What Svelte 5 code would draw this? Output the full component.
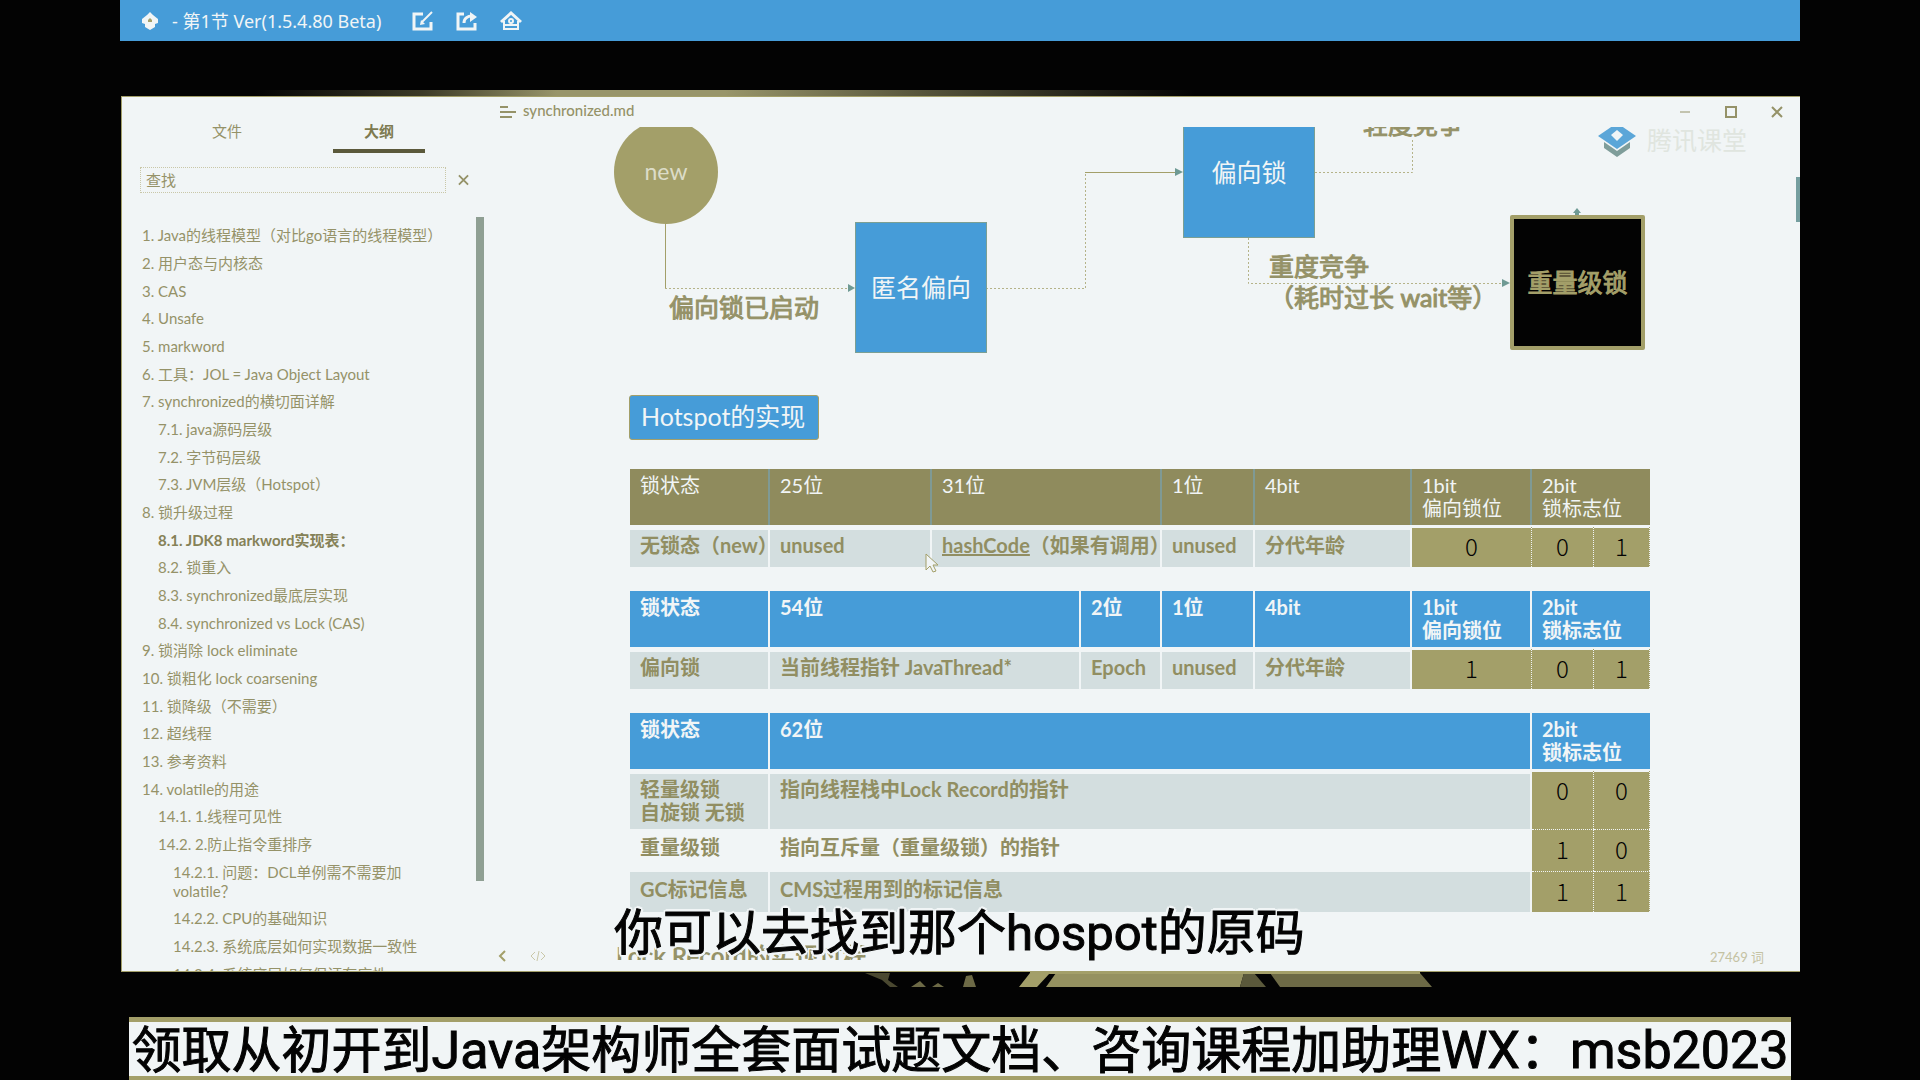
<script lang="ts">
  type Item = { n: string; t: string; l: number; b?: boolean };
  const outline: Item[] = [
    { n: '1.', t: 'Java的线程模型（对比go语言的线程模型）', l: 1 },
    { n: '2.', t: '用户态与内核态', l: 1 },
    { n: '3.', t: 'CAS', l: 1 },
    { n: '4.', t: 'Unsafe', l: 1 },
    { n: '5.', t: 'markword', l: 1 },
    { n: '6.', t: '工具：JOL = Java Object Layout', l: 1 },
    { n: '7.', t: 'synchronized的横切面详解', l: 1 },
    { n: '7.1.', t: 'java源码层级', l: 2 },
    { n: '7.2.', t: '字节码层级', l: 2 },
    { n: '7.3.', t: 'JVM层级（Hotspot）', l: 2 },
    { n: '8.', t: '锁升级过程', l: 1 },
    { n: '8.1.', t: 'JDK8 markword实现表：', l: 2, b: true },
    { n: '8.2.', t: '锁重入', l: 2 },
    { n: '8.3.', t: 'synchronized最底层实现', l: 2 },
    { n: '8.4.', t: 'synchronized vs Lock (CAS)', l: 2 },
    { n: '9.', t: '锁消除 lock eliminate', l: 1 },
    { n: '10.', t: '锁粗化 lock coarsening', l: 1 },
    { n: '11.', t: '锁降级（不需要）', l: 1 },
    { n: '12.', t: '超线程', l: 1 },
    { n: '13.', t: '参考资料', l: 1 },
    { n: '14.', t: 'volatile的用途', l: 1 },
    { n: '14.1.', t: '1.线程可见性', l: 2 },
    { n: '14.2.', t: '2.防止指令重排序', l: 2 },
    { n: '14.2.1.', t: '问题：DCL单例需不需要加volatile？', l: 3 },
    { n: '14.2.2.', t: 'CPU的基础知识', l: 3 },
    { n: '14.2.3.', t: '系统底层如何实现数据一致性', l: 3 },
    { n: '14.2.4.', t: '系统底层如何保证有序性', l: 3 }
  ];

  type Cell = { t: string; span?: number; bit?: boolean; link?: string };
  type Sheet = { tone: string; head: Cell[]; rows: Cell[][] };
  const cols = [140, 162, 149, 81, 93, 157, 120, 62, 56];
  const total = cols.reduce((a, b) => a + b, 0);
  const sheets: Sheet[] = [
    {
      tone: 'olive',
      head: [{ t: '锁状态' }, { t: '25位' }, { t: '31位', span: 2 }, { t: '1位' }, { t: '4bit' }, { t: '1bit\n偏向锁位' }, { t: '2bit\n锁标志位', span: 2 }],
      rows: [[{ t: '无锁态（new）' }, { t: 'unused' }, { t: '（如果有调用）', link: 'hashCode', span: 2 }, { t: 'unused' }, { t: '分代年龄' }, { t: '0', bit: true }, { t: '0', bit: true }, { t: '1', bit: true }]]
    },
    {
      tone: 'blue',
      head: [{ t: '锁状态' }, { t: '54位', span: 2 }, { t: '2位' }, { t: '1位' }, { t: '4bit' }, { t: '1bit\n偏向锁位' }, { t: '2bit\n锁标志位', span: 2 }],
      rows: [[{ t: '偏向锁' }, { t: '当前线程指针 JavaThread*', span: 2 }, { t: 'Epoch' }, { t: 'unused' }, { t: '分代年龄' }, { t: '1', bit: true }, { t: '0', bit: true }, { t: '1', bit: true }]]
    },
    {
      tone: 'blue',
      head: [{ t: '锁状态' }, { t: '62位', span: 6 }, { t: '2bit\n锁标志位', span: 2 }],
      rows: [
        [{ t: '轻量级锁\n自旋锁 无锁' }, { t: '指向线程栈中Lock Record的指针', span: 6 }, { t: '0', bit: true }, { t: '0', bit: true }],
        [{ t: '重量级锁' }, { t: '指向互斥量（重量级锁）的指针', span: 6 }, { t: '1', bit: true }, { t: '0', bit: true }],
        [{ t: 'GC标记信息' }, { t: 'CMS过程用到的标记信息', span: 6 }, { t: '1', bit: true }, { t: '1', bit: true }]
      ]
    }
  ];
</script>

<div class="page">
  <div class="stage">
    <header class="topbar">
      <svg class="brand" viewBox="0 0 18 20" aria-hidden="true">
        <path d="M9 1L12 4L17 8V12L14 13V16L9 19L4 16V13L1 12V8L6 4Z" fill="#f1f5f6" />
        <path d="M7 9L9 7L11 9V11H7Z" fill="#a39f69" />
      </svg>
      <span class="title">- 第1节 Ver(1.5.4.80 Beta)</span>
      <button aria-label="编辑">
        <svg viewBox="0 0 22 20"><path d="M11 3H2V18H19V11" stroke-width="3" /><path d="M10 11L20 1" /><path d="M8 14l1-5 4 4z" fill="#f1f5f6" stroke="none" /></svg>
      </button>
      <button aria-label="分享">
        <svg viewBox="0 0 22 20"><path d="M8 3H2V18H19V12" stroke-width="3" /><path d="M8 12C8 7 12 5 16 5" stroke-width="3" /><path d="M14 1L21 6L14 11Z" fill="#f1f5f6" stroke="none" /></svg>
      </button>
      <button aria-label="主页">
        <svg viewBox="0 0 22 20"><path d="M1 11L11 2L21 11" stroke-width="3" /><path d="M4 10V18H18V10" /><circle cx="11" cy="10" r="2" /><path d="M5 14H17" /></svg>
      </button>
    </header>

    <div class="strip top"></div>

    <main class="window">
      <aside class="side">
        <nav class="tabs" aria-label="侧栏">
          <button class="tab">文件</button>
          <button class="tab active">大纲</button>
        </nav>
        <div class="find">
          <input type="text" placeholder="查找" aria-label="查找" />
          <button aria-label="关闭查找"><svg viewBox="0 0 12 12"><path d="M1 1L11 11M11 1L1 11" /></svg></button>
        </div>
        <div class="outline">
          <ol>
            {#each outline as item}
              <li class="l{item.l}" class:current={item.b}>{item.n} {item.t}</li>
            {/each}
          </ol>
          <div class="thumb"></div>
        </div>
      </aside>

      <section class="doc">
        <div class="caption">
          <svg class="lines" viewBox="0 0 16 12"><path d="M0 1H8M0 6H16M0 11H12" /></svg>
          <span class="name">synchronized.md</span>
          <div class="controls">
            <button aria-label="最小化"><svg viewBox="0 0 12 12"><path d="M1 6H11" stroke-width="1" /></svg></button>
            <button aria-label="最大化"><svg viewBox="0 0 12 12"><path d="M1 1H11V11H1Z" /></svg></button>
            <button aria-label="关闭"><svg viewBox="0 0 12 12"><path d="M1 1L11 11M11 1L1 11" /></svg></button>
          </div>
        </div>

        <div class="canvas">
          <svg class="wires" viewBox="0 0 1315 245">
            <path class="solid" d="M180.500 97V161" />
            <path d="M180 161.500H366" />
            <path d="M501 161.500H600.500V45" />
            <path class="solid" d="M600 45.500H694" />
            <path d="M830 45.500H927.500V11" />
            <path d="M763.500 111V156.500H1020" />
            <g class="tips">
              <path d="M363 157L370 161L363 165Z" />
              <path d="M690 41L698 45L690 49Z" />
              <path d="M1017 152L1025 156L1017 160Z" />
              <path d="M1092 81L1096 86H1094V90H1090V86H1088Z" />
            </g>
          </svg>
          <div class="node round">new</div>
          <div class="node anon">匿名偏向</div>
          <div class="node biased">偏向锁</div>
          <div class="node heavy">重量级锁</div>
          <div class="label started">偏向锁已启动</div>
          <div class="label light">轻度竞争</div>
          <div class="label hard">重度竞争<br />（耗时过长 wait等）</div>
          <div class="mark">
            <svg viewBox="0 0 40 36">
              <path d="M20 1L39 14L20 27L1 14Z" fill="#5ba6d8" />
              <path d="M7 20L20 29L33 20V26L20 35L7 26Z" fill="#7f9d9a" />
              <path d="M20 8L26 13L20 19L14 13Z" fill="#f1f5f6" />
            </svg>
            <span>腾讯课堂</span>
          </div>
          <svg class="pointer" viewBox="0 0 14 20" aria-hidden="true"><path d="M1 1V17L5 13L8 19L11 18L8 12H13Z" /></svg>
          <div class="scroll"></div>
        </div>

        <div class="body">
          <h2>Hotspot的实现</h2>
          {#each sheets as s}
            <table class={s.tone}>
              <colgroup>
                {#each cols as c}<col style="width: {(c / total) * 100}%" />{/each}
              </colgroup>
              <thead>
                <tr>{#each s.head as c}<th colspan={c.span ?? 1}>{c.t}</th>{/each}</tr>
              </thead>
              <tbody>
                {#each s.rows as r}
                  <tr>
                    {#each r as c}
                      <td colspan={c.span ?? 1} class:bit={c.bit}>{#if c.link}<u>{c.link}</u>{/if}{c.t}</td>
                    {/each}
                  </tr>
                {/each}
              </tbody>
            </table>
          {/each}
          <div class="next">Lock Record的实现过程</div>
        </div>

        <footer class="status">
          <button aria-label="返回"><svg viewBox="0 0 8 12"><path d="M7 1L2 6L7 11" /></svg></button>
          <button class="code" aria-label="源代码模式"><svg viewBox="0 0 16 12"><path d="M5 2L1 6L5 10M11 2L15 6L11 10M9 1L7 11" /></svg></button>
          <span class="count">27469 词</span>
        </footer>
      </section>
      <p class="subtitle">你可以去找到那个hospot的原码</p>
    </main>

    <svg class="strip bottom" viewBox="0 0 1680 45" preserveAspectRatio="none" aria-hidden="true">
      <path d="M745 1H770L768 8L778 15H770L762 8Z" fill="#4a4830" />
      <path d="M791 15L800 9L806 15ZM812 15L818 11L824 15ZM843 15L846 4L852 3L856 15Z" fill="#6d6a46" />
      <path d="M910 1H930L917 15H899Z" fill="#a39f69" />
      <path d="M936 1H1124L1120 15H926Z" fill="#959160" />
      <path d="M1124 1H1134L1146 15H1120Z" fill="#5b593b" />
      <path d="M1150 1H1300L1312 15H1160Z" fill="#6d6a46" />
      <path d="M910 0H1300V2H910Z" fill="#a39f69" />
    </svg>
  </div>
  <p class="banner">领取从初开到<b>Java</b>架构师全套面试题文档、咨询课程加助理<b>WX</b>：<b>msb2023</b></p>
</div>

<style>
  :global(body) { margin: 0; background: #030303; }
  .page {
    --paper: #f1f5f6;
    --olive: #a39f69;
    --blue: #469cd8;
    --ink: #959268;
    min-height: 100vh;
    display: flex;
    flex-direction: column;
    background: #030303;
    overflow: hidden;
    font-family: Lato, "Noto Sans CJK SC", sans-serif;
    color: var(--ink);
  }
  button { padding: 0; border: 0; background: none; color: inherit; font: inherit; display: flex; align-items: center; justify-content: center; }
  svg { display: block; fill: none; stroke: currentColor; stroke-width: 2; }
  p { margin: 0; }
  .stage { width: 87.5%; margin: 0 auto; }

  .topbar { height: 41px; display: flex; align-items: center; gap: 23px; padding-left: 21px; background: var(--blue); color: var(--paper); }
  .topbar svg { width: 22px; height: 20px; }
  .topbar .brand { width: 18px; height: 20px; stroke: none; }
  .title { margin: 0 8px 0 -10px; font: 18px/20px "Noto Sans", "Noto Sans CJK SC", sans-serif; white-space: pre; }
  .topbar button { margin-right: -1px; }

  .strip.top { height: 6px; margin-top: 49px; background: linear-gradient(90deg, #030303 8%, #3c3a27 18%, #98956a 26%, #98956a 36%, #55533a 48%, #030303 64%); }
  .strip.bottom { width: 100%; height: 45px; stroke: none; }

  .window { position: relative; height: 876px; display: flex; margin-left: 1px; border: solid var(--olive); border-width: 1px 0 1px 1px; box-sizing: border-box; background: var(--paper); overflow: hidden; }
  .side { width: 364px; flex: none; display: flex; flex-direction: column; }
  .tabs { display: flex; padding: 18px 0 0 59px; gap: 60px; }
  .tab { width: 92px; height: 38px; align-items: flex-start; padding-top: 4px; box-sizing: border-box; font-size: 15px; line-height: 24px; border-bottom: 4px solid transparent; }
  .tab.active { font-weight: 700; color: #7d7a50; border-color: #5b593b; }
  .find { display: flex; align-items: center; gap: 12px; margin: 14px 0 0 18px; }
  .find input { width: 306px; height: 26px; box-sizing: border-box; padding: 0 5px; border: 1px dotted #c9c7a8; background: transparent; color: var(--ink); font: inherit; font-size: 15px; }
  .find input::placeholder { color: var(--ink); opacity: 1; }
  .find svg { width: 11px; height: 12px; }
  .outline { position: relative; flex: 1; margin-top: 23px; overflow: hidden; }
  ol { list-style: none; margin: 0; padding: 10px 60px 0 20px; font-size: 15px; line-height: 19px; }
  li { margin-bottom: 9px; }
  li:nth-child(3n) { margin-bottom: 8px; }
  li:first-child { white-space: nowrap; }
  .l2 { padding-left: 16px; }
  .l3 { padding-left: 31px; }
  .current { font-weight: 700; color: #858157; }
  .thumb { position: absolute; top: 1px; right: 2px; width: 8px; height: 664px; background: #8f9f93; }

  .doc { flex: 1; min-width: 0; display: flex; flex-direction: column; }
  .caption { flex: none; height: 30px; display: flex; align-items: center; gap: 7px; padding: 0 17px 0 14px; box-sizing: border-box; font-size: 15px; }
  .lines { width: 16px; height: 12px; }
  .name { padding-bottom: 4px; font-weight: 500; }
  .controls { margin-left: auto; display: flex; gap: 34px; }
  .controls svg { width: 12px; height: 12px; }

  .canvas { position: relative; flex: none; height: 268px; margin-left: -1px; }
  .canvas { clip-path: inset(0 0 -300px 0); }
  .wires { position: absolute; left: 0; top: 0; width: 1315px; height: 245px; stroke: #b5b389; stroke-width: 1; stroke-dasharray: 2 2; }
  .wires .solid { stroke: var(--olive); stroke-dasharray: none; }
  .tips { fill: #6f9a94; stroke: none; }
  .node { position: absolute; display: flex; align-items: center; justify-content: center; box-sizing: border-box; font-size: 25px; line-height: 28px; padding-bottom: 2px; color: var(--paper); background: var(--blue); border: 1px solid #7b9f93; }
  .round { left: 129px; top: -7px; width: 104px; height: 104px; border-radius: 50%; border: 0; background: var(--olive); font-size: 23px; color: #dcdcc8; }
  .anon { left: 370px; top: 95px; width: 132px; height: 131px; }
  .biased { left: 698px; top: -20px; width: 132px; height: 131px; }
  .heavy { left: 1025px; top: 88px; width: 135px; height: 135px; background: #030303; border: 4px solid var(--olive); border-radius: 2px; color: var(--olive); -webkit-text-stroke: 1px var(--olive); }
  .label { position: absolute; font-size: 25px; line-height: 31px; white-space: nowrap; -webkit-text-stroke: 1px var(--ink); }
  .started { left: 184px; top: 165px; }
  .light { left: 878px; top: -18px; }
  .hard { left: 784px; top: 124px; }
  .mark { position: absolute; left: 1112px; top: -5px; display: flex; align-items: center; gap: 10px; font-size: 25px; line-height: 36px; color: #e0e5df; }
  .mark svg { width: 40px; height: 36px; stroke: none; }
  .pointer { position: absolute; z-index: 1; left: 440px; top: 426px; width: 14px; height: 20px; fill: var(--paper); stroke: var(--olive); stroke-width: 1; }
  .scroll { position: absolute; right: 0; top: 50px; width: 4px; height: 45px; background: #759e9f; }

  .body { flex: 1; min-height: 0; overflow: hidden; padding: 0 150px 0 144px; }
  h2 { display: table; margin: 0 0 29px -1px; padding: 0 13px 0 11px; height: 45px; box-sizing: border-box; border: 1px solid var(--olive); border-radius: 3px; background: var(--blue); color: var(--paper); font-size: 25px; line-height: 41px; font-weight: 400; }
  table { width: 100%; table-layout: fixed; border-collapse: separate; border-spacing: 0; margin-bottom: 24px; font-size: 20px; line-height: 23px; white-space: pre; }
  th, td { box-sizing: border-box; padding: 4px 0 5px 10px; text-align: left; vertical-align: top; border-right: 2px solid var(--paper); }
  th:last-child, td:last-child { border-right: 0; }
  th { height: 56px; background: var(--blue); color: var(--paper); font-weight: 700; padding: 5px 0 0 10px; }
  .olive th { background: #8f8b5d; border-right-color: #7f9a95; font-weight: 400; }
  td { height: 42px; color: #918e62; font-weight: 700; background: #d3dedf; border-top: 5px solid var(--paper); }
  td.bit { padding: 5px 0 0; text-align: center; background: var(--olive); color: #030303; font: 300 24px/26px "Noto Sans CJK SC", sans-serif; border-right: 1px dotted var(--paper); border-top-width: 3px; }
  tr:nth-child(2) td { background: var(--paper); border-top-width: 1px; padding-top: 6px; }
  tr:nth-child(3) td { height: 41px; border-top-width: 1px; padding-top: 6px; }
  tbody tr:nth-child(n + 2) td.bit { background: var(--olive); border-top: 1px dotted var(--paper); }
  .next { height: 16px; margin: 32px 0 0 -14px; overflow: hidden; font-size: 24px; line-height: 24px; font-weight: 700; }

  .status { position: absolute; left: 364px; right: 0; bottom: 7px; height: 16px; display: flex; align-items: center; padding: 0 36px 0 12px; font-size: 13px; color: #c4c2a2; gap: 24px; }
  .status svg { width: 8px; height: 12px; color: var(--olive); }
  .status .code svg { width: 16px; color: #c9c7a8; stroke-width: 1; }
  .count { margin-left: auto; }

  .subtitle { position: absolute; z-index: 2; left: 492px; top: 802px; font: 49px/70px Roboto, "Noto Sans CJK SC", sans-serif; color: #030303; -webkit-text-stroke: 1px #030303; white-space: nowrap; text-shadow: 3px 0 0 var(--paper), -3px 0 0 var(--paper), 0 3px 0 var(--paper), 0 -3px 0 var(--paper), 2px 2px 0 var(--paper), -2px -2px 0 var(--paper), 2px -2px 0 var(--paper), -2px 2px 0 var(--paper); }
  .banner { width: 1662px; max-width: 100%; height: 63px; flex: none; align-self: center; box-sizing: border-box; border-top: 5px solid var(--olive); border-bottom: 4px solid var(--olive); background: var(--paper); color: #030303; text-align: center; white-space: nowrap; font: 50px/58px Roboto, "Noto Sans CJK SC", sans-serif; -webkit-text-stroke: 1px #030303; }
  .banner b { font-size: 52px; font-weight: 400; }
</style>
